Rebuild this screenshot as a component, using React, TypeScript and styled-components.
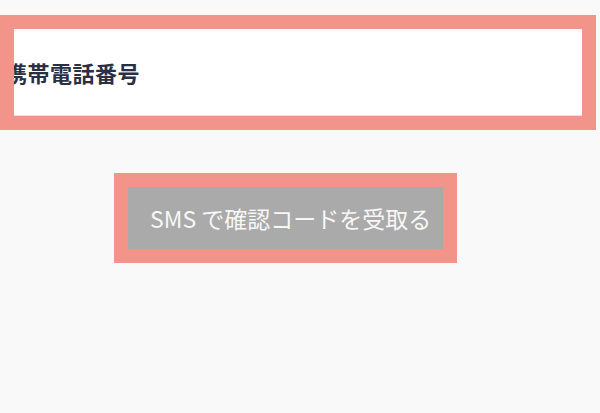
import React from 'react';
import styled, { createGlobalStyle } from 'styled-components';

const GlobalStyle = createGlobalStyle`
  html, body {
    margin: 0;
    padding: 0;
    background: #f9f9f9;
  }
  body {
    font-family: "Noto Sans CJK JP", "Noto Sans", sans-serif;
  }
`;

const Page = styled.div`
  width: 600px;
  height: 413px;
  padding-top: 15px;
  box-sizing: border-box;
  overflow: hidden;
`;

const Highlight = styled.div<{ width: number }>`
  width: ${props => props.width}px;
  box-sizing: border-box;
  border: 14px solid #f29489;
`;

const FieldRow = styled.div`
  height: 86px;
  background: #ffffff;
  border-bottom: 1px solid #e4e4e6;
  display: flex;
  align-items: center;
  overflow: hidden;
`;

const FieldLabel = styled.span`
  margin-left: -9px;
  font-size: 22px;
  font-weight: 700;
  color: #2a3044;
  white-space: nowrap;
  letter-spacing: 0.5px;
`;

const ButtonArea = styled.div`
  margin-top: 43px;
  padding-left: 114px;
`;

const SmsButton = styled.button`
  display: flex;
  align-items: center;
  width: 100%;
  height: 62px;
  padding: 0 0 0 22px;
  border: 0;
  background: #aaaaaa;
  color: #f7f7f7;
  font-family: "Noto Sans CJK JP", "Noto Sans", sans-serif;
  font-size: 23px;
  font-weight: 400;
  white-space: nowrap;
  cursor: pointer;
`;

export default function App() {
  return (
    <Page>
      <GlobalStyle />
      <Highlight width={596}>
        <FieldRow>
          <FieldLabel>携帯電話番号</FieldLabel>
        </FieldRow>
      </Highlight>
      <ButtonArea>
        <Highlight width={343}>
          <SmsButton>SMS で確認コードを受取る</SmsButton>
        </Highlight>
      </ButtonArea>
    </Page>
  );
}
